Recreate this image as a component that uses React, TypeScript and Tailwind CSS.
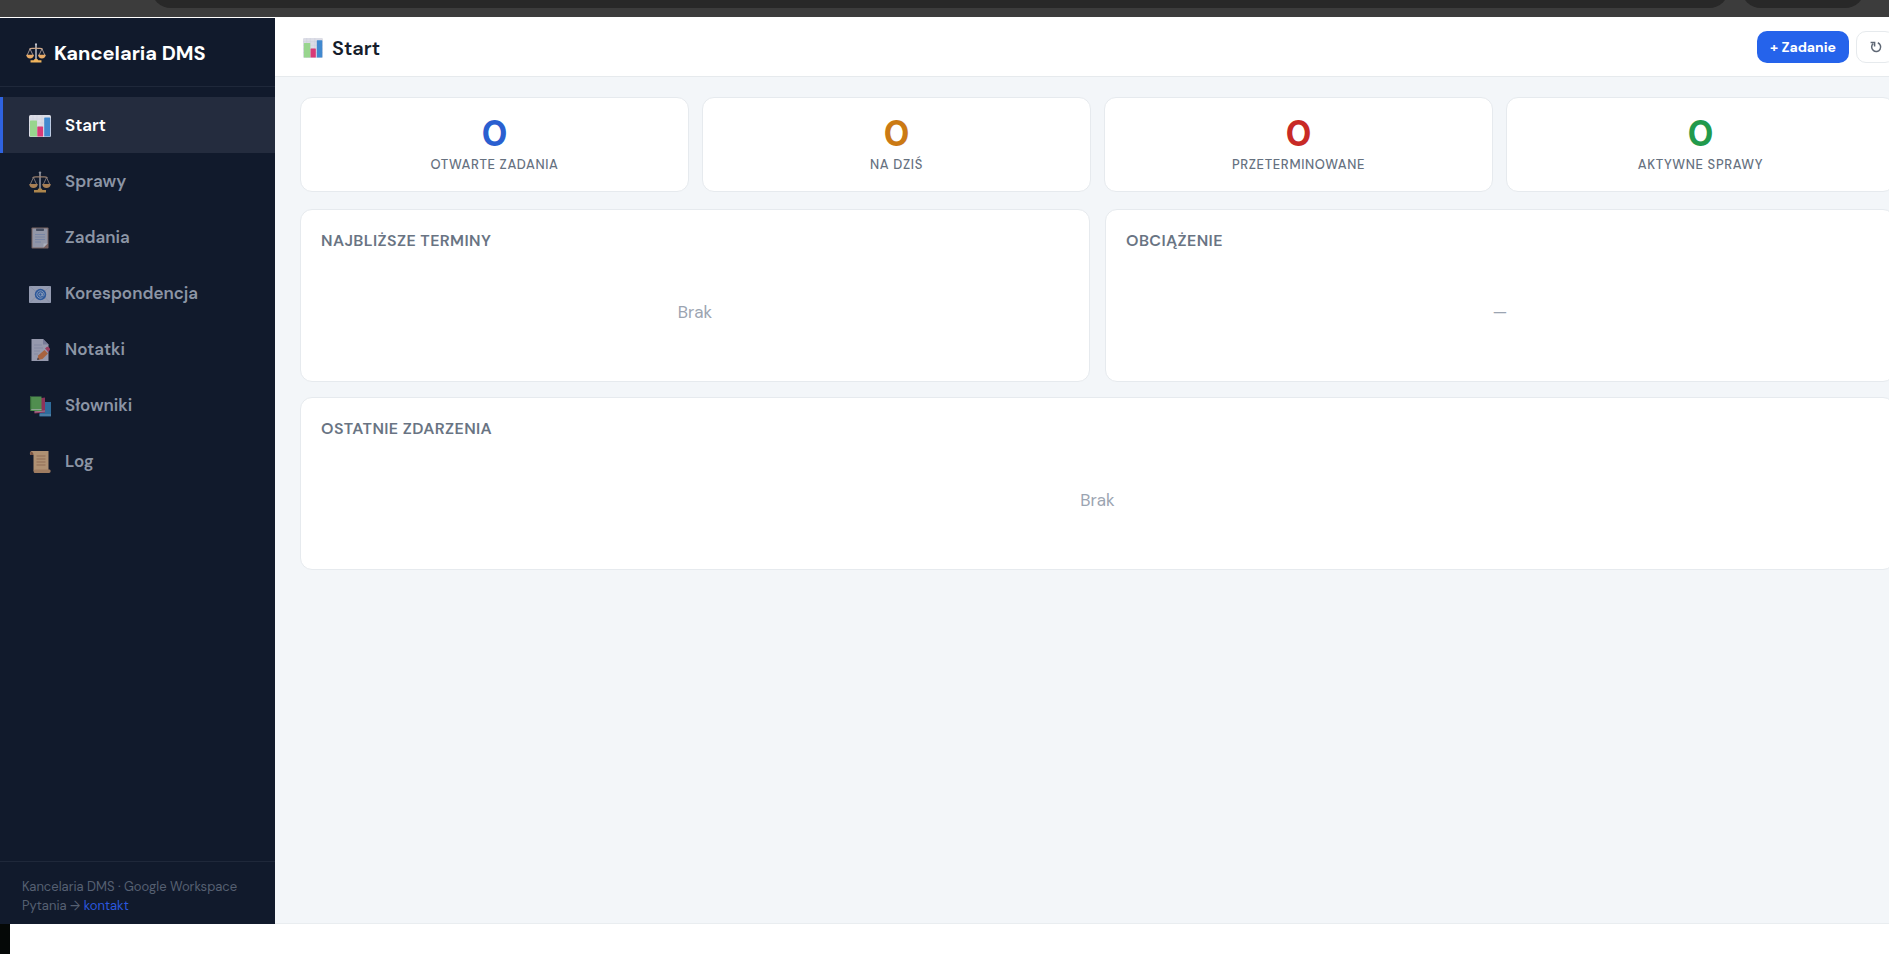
import React from "react";

type IconProps = { className?: string };

function ChartIcon({ className }: IconProps) {
  return (
    <svg viewBox="0 0 22 22" className={className} aria-hidden="true">
      <rect x="0" y="0" width="22" height="22" rx="1.5" fill="#dcdde6" />
      <path d="M0 4h22M0 8h22M0 12h22M0 16h22M4 0v22M8 0v22M13 0v22" stroke="#c9cfdc" strokeWidth=".5" />
      <rect x="1" y="5.500" width="7" height="16" rx=".6" fill="#98d58e" />
      <rect x="8.3" y="11.5" width="5.8" height="10" rx=".6" fill="#d93a77" />
      <rect x="15.2" y="2.5" width="6" height="19" rx=".6" fill="#4189cf" />
    </svg>
  );
}

function ScalesIcon({ className }: IconProps) {
  return (
    <svg viewBox="0 0 22 22" className={className} aria-hidden="true" fill="none">
      <path d="M11 1v17" stroke="#c3c4cc" strokeWidth="1.6" />
      <circle cx="11" cy="1.6" r="1.2" fill="#c3c4cc" />
      <path d="M3.6 7C6 4.6 8.500 6.800 11 5.600 13.500 6.800 16 4.600 18.400 7" stroke="#d3a987" strokeWidth="1.300" />
      <path d="M4.400 6.500L1 14M4.400 6.500L8 14M17.600 6.500L14 14M17.600 6.500L21 14" stroke="#b9a8a4" strokeWidth=".9" />
      <path d="M.3 13h8.400c0 2.500-1.900 4-4.200 4S.3 15.500.3 13zM13.300 13h8.400c0 2.500-1.900 4-4.200 4s-4.200-1.500-4.200-4z" fill="#e9ab66" />
      <path d="M9.500 17.500h3l1 1.500h3.500v2.500H5V19h3.500z" fill="#f0b45c" />
    </svg>
  );
}

function ClipboardIcon({ className }: IconProps) {
  return (
    <svg viewBox="0 0 22 22" className={className} aria-hidden="true">
      <rect x="2.500" y=".5" width="17" height="21" rx=".8" fill="#a88379" />
      <path d="M3.500 1.500h15v15l-4 4h-11z" fill="#c9cbdc" />
      <path d="M18.500 16.500l-4 4v-4z" fill="#eef0f8" />
      <rect x="7" y="1.500" width="8" height="2.500" rx=".8" fill="#5d6579" />
      <path d="M6 7.500h10M6 10h10M6 12.500h10M6 15h6" stroke="#9fb0d6" strokeWidth=".9" />
    </svg>
  );
}

function MailIcon({ className }: IconProps) {
  return (
    <svg viewBox="0 0 22 22" className={className} aria-hidden="true" fill="none">
      <rect x="0" y="3" width="22" height="17" rx=".8" fill="#ccd2ea" />
      <path d="M1 19.500l7-7M21 19.500l-7-7M1 3.500l7 6M21 3.500l-7 6" stroke="#b4bbd6" strokeWidth=".7" />
      <circle cx="11.500" cy="11.500" r="5.700" fill="#3c74c9" />
      <circle cx="11.500" cy="11.500" r="1.700" stroke="#cfe0fa" strokeWidth=".9" />
      <path d="M13.200 9.800v2.200c0 1.600 2 1.400 2-.5a3.700 3.700 0 1 0-1.700 3.100" stroke="#cfe0fa" strokeWidth=".8" />
    </svg>
  );
}

function MemoIcon({ className }: IconProps) {
  return (
    <svg viewBox="0 0 22 22" className={className} aria-hidden="true">
      <path d="M2.500 0H14l5.500 5.500V22h-17z" fill="#cfcfe4" />
      <path d="M14 0l5.500 5.500H14z" fill="#a3a5c6" />
      <path d="M5 6h8M5 9h9M5 12h6M5 15h4" stroke="#aeb4d0" strokeWidth=".8" />
      <path d="M15.500 11l3.500 3.500-5.500 5.500-5.300 1 1.200-4.700z" fill="#e78348" />
      <path d="M16 9.500l2-1.700c1.500-.4 3.300 1.400 3 3L19.200 13z" fill="#d44f78" />
      <path d="M8.200 21l.5-2.300 1.800 1.600z" fill="#42445a" />
    </svg>
  );
}

function BooksIcon({ className }: IconProps) {
  return (
    <svg viewBox="0 0 22 22" className={className} aria-hidden="true">
      <path d="M10.500 7h11.500v14.500H10.500z" fill="#3c8fcb" />
      <path d="M10.500 19.500h11.500v1H10.500z" fill="#8fc0e0" />
      <path d="M5.500 4l10.500-1.500V17.500L5.500 18.500z" fill="#c33e70" />
      <path d="M5.500 16.500l10.500-1v1L5.500 17.500z" fill="#dcaebd" />
      <path d="M1 1.500h11.500v14.500H1z" fill="#6cc05f" />
      <path d="M1 14h11.500v1H1z" fill="#c4dfc0" />
      <path d="M1 1.500h1.200v14.500H1z" fill="#438a3c" />
    </svg>
  );
}

function ScrollIcon({ className }: IconProps) {
  return (
    <svg viewBox="0 0 22 22" className={className} aria-hidden="true">
      <path d="M2.500 0H19.500v19.500H4.500V4H1.500C.3 2.500.8.500 2.500 0z" fill="#f3c492" />
      <path d="M1.200 1.200C2.800 0 4.500 1.500 4.500 4h-3z" fill="#a86f4f" />
      <path d="M7 18.500h13.500c1.500 0 1.500 3.500-.5 3.500H5.500C4.500 21.500 4.500 20 4.500 19z" fill="#dca678" />
      <path d="M7.500 5h9M7.500 8h9M7.500 11h9M7.500 14h9" stroke="#c58f66" strokeWidth="1" />
    </svg>
  );
}

function RefreshIcon({ className }: IconProps) {
  return (
    <svg viewBox="0 0 12 12" className={className} aria-hidden="true" fill="none" stroke="currentColor" strokeWidth="1.500">
      <path d="M7.800 1.800A4.500 4.500 0 1 1 3.200 2.600" />
      <path d="M.6 1.600h4v3.800" />
    </svg>
  );
}

const navItems = [
  { label: "Start", Icon: ChartIcon, active: true },
  { label: "Sprawy", Icon: ScalesIcon },
  { label: "Zadania", Icon: ClipboardIcon },
  { label: "Korespondencja", Icon: MailIcon },
  { label: "Notatki", Icon: MemoIcon },
  { label: "Słowniki", Icon: BooksIcon },
  { label: "Log", Icon: ScrollIcon },
];

const stats = [
  { label: "Otwarte zadania", value: 0, color: "text-[#2a5fd0]" },
  { label: "Na dziś", value: 0, color: "text-[#cb7a14]" },
  { label: "Przeterminowane", value: 0, color: "text-[#c82a26]" },
  { label: "Aktywne sprawy", value: 0, color: "text-[#229a4c]" },
];

function BrowserBar() {
  return (
    <div className="flex h-[17px] shrink-0 items-start gap-[12px] overflow-hidden bg-[#3c3c3c] pr-6 pl-[151px]">
      <div className="-mt-8 h-10 flex-1 rounded-full bg-[#282828]" />
      <div className="-mt-8 h-10 w-[124px] rounded-full bg-[#282828]" />
    </div>
  );
}

function Sidebar() {
  return (
    <aside className="mt-px flex w-[275px] shrink-0 flex-col bg-[#111a2c]">
      <div className="flex h-[69px] items-center gap-2 border-b border-[#1f283a] px-[26px] pt-[2px]">
        <ScalesIcon className="size-5" />
        <span className="text-xl font-bold text-white">Kancelaria DMS</span>
      </div>
      <nav className="flex flex-1 flex-col pt-[10px]">
        {navItems.map(({ label, Icon, active }) => (
          <a
            key={label}
            href="#"
            aria-current={active ? "page" : undefined}
            className={
              active
                ? "flex h-14 items-center gap-[14px] border-l-[3px] border-[#2f63e0] bg-[#242c3e] pt-px pl-[26px] text-[17px] font-semibold text-white"
                : "flex h-14 items-center gap-[14px] border-l-[3px] border-transparent pt-px pl-[26px] text-[17px] font-semibold text-[#8c95a5]"
            }
          >
            <Icon className={active ? "size-[22px]" : "size-[22px] opacity-70"} />
            {label}
          </a>
        ))}
      </nav>
      <div className="border-t border-[#1f283a] px-[22px] pt-[15px] pb-[9px] text-[13px] leading-[19px] text-[#566072]">
        <p>Kancelaria DMS · Google Workspace</p>
        <p>
          Pytania →{" "}
          <a href="#" className="text-[#2b57dd]">
            kontakt
          </a>
        </p>
      </div>
    </aside>
  );
}

function Panel({ title, empty, className }: { title: string; empty: string; className?: string }) {
  return (
    <section className={`rounded-xl border border-[#e6eaee] bg-white px-5 pt-[19px] pb-14 ${className ?? ""}`}>
      <h2 className="text-base leading-6 font-semibold tracking-wide text-[#697483] uppercase">{title}</h2>
      <p className="pt-[46px] text-center text-[17px] leading-[26px] text-[#9ba4b1]">{empty}</p>
    </section>
  );
}

export default function App() {
  return (
    <div className="flex h-screen flex-col overflow-hidden bg-white font-['DM_Sans','Inter',sans-serif]">
      <BrowserBar />
      <div className="flex min-h-0 w-[calc(100%+31px)] flex-1">
        <Sidebar />
        <div className="flex min-w-0 flex-1 flex-col border-b border-[#e9edf0] bg-[#f3f6f9]">
          <header className="flex h-[60px] shrink-0 items-center justify-between border-b border-[#e6eaed] bg-white pr-[25px] pl-[28px]">
            <h1 className="flex items-center gap-[9px] pt-[3px] text-xl font-semibold text-[#161d2b]">
              <ChartIcon className="size-5" />
              Start
            </h1>
            <div className="flex items-center gap-[7px]">
              <button
                type="button"
                className="h-8 w-[92px] rounded-[10px] bg-[#2563eb] pt-px text-[14px] font-bold whitespace-nowrap text-white"
              >
                + Zadanie
              </button>
              <button
                type="button"
                aria-label="Odśwież"
                className="flex h-8 w-[39px] items-center justify-center rounded-[10px] border border-[#e6eaed] bg-white pt-px text-[#5f6875]"
              >
                <RefreshIcon className="size-3" />
              </button>
            </div>
          </header>
          <main className="flex flex-col px-[25px] pt-5">
            <div className="grid grid-cols-4 gap-[13px]">
              {stats.map((s) => (
                <div
                  key={s.label}
                  className="flex flex-col items-center rounded-xl border border-[#e6eaee] bg-white pt-[15px] pb-4"
                >
                  <div className={`text-[37px] leading-10 font-bold ${s.color}`}>{s.value}</div>
                  <div className="pt-[2px] text-[13px] leading-5 font-medium tracking-wider text-[#66717f] uppercase">
                    {s.label}
                  </div>
                </div>
              ))}
            </div>
            <div className="mt-[17px] grid grid-cols-2 gap-[15px]">
              <Panel title="Najbliższe terminy" empty="Brak" />
              <Panel title="Obciążenie" empty="—" />
              <Panel title="Ostatnie zdarzenia" empty="Brak" className="col-span-2" />
            </div>
          </main>
        </div>
      </div>
      <div className="flex h-[30px] shrink-0 bg-white">
        <div className="w-[10px] bg-[#050807]" />
      </div>
    </div>
  );
}
